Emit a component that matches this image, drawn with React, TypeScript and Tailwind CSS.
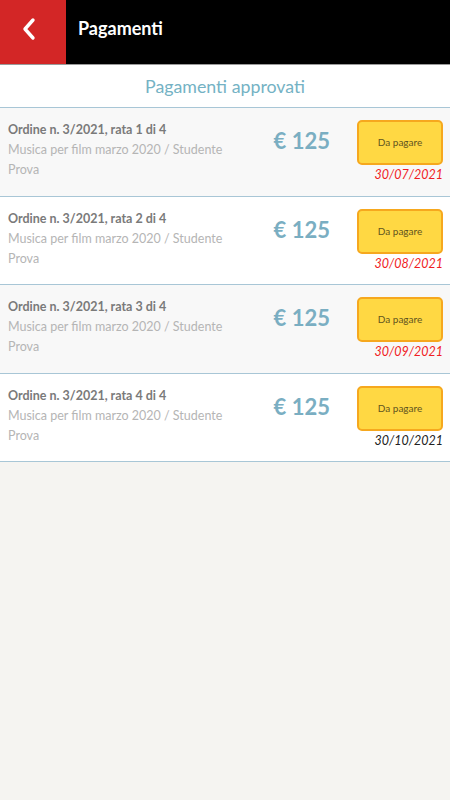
import React from "react";

const rows = [
  { rata: 1, date: "30/07/2021", late: true, bg: "bg-[#f8f8f8]" },
  { rata: 2, date: "30/08/2021", late: true, bg: "bg-white" },
  { rata: 3, date: "30/09/2021", late: true, bg: "bg-[#f8f8f8]" },
  { rata: 4, date: "30/10/2021", late: false, bg: "bg-white" },
];

export default function App() {
  return (
    <div className="min-h-[800px] w-[450px] bg-[#f5f4f1] font-['Lato','Noto_Sans',sans-serif]">
      <div className="flex h-[65px] border-b border-[#9a9a9a] bg-black">
        <div className="flex h-full w-[66px] items-center justify-center bg-[#d32626] pb-[6px] pr-[8px]">
          <svg width="16" height="24" viewBox="0 0 16 24" fill="none">
            <path d="M12 3 L4 12 L12 21" stroke="white" strokeWidth="3.4" strokeLinecap="round" strokeLinejoin="round" />
          </svg>
        </div>
        <div className="flex items-center pl-[12px] pb-[8px] text-[18px] font-bold text-white">Pagamenti</div>
      </div>
      <div className="flex h-[43px] items-center justify-center border-b border-[#a8c6d6] bg-white text-[17.8px] text-[#74b2c4]">
        Pagamenti approvati
      </div>
      {rows.map((r) => (
        <div key={r.rata} className={`flex h-[88.5px] items-start border-b border-[#a8c6d6] pt-[12px] ${r.bg}`}>
          <div className="flex-1 pl-[8px] text-[12.5px] leading-[20px]">
            <div className="font-bold text-[#7a7a7a]">Ordine n. 3/2021, rata {r.rata} di 4</div>
            <div className="w-[225px] text-[#b5b5b5]">Musica per film marzo 2020 / Studente Prova</div>
          </div>
          <div className="mr-[27px] mt-[6px] text-[22px] font-bold leading-[30px] text-[#7aaec2]">€ 125</div>
          <div className="mr-[7px] flex w-[86px] flex-col items-end">
            <div className="flex h-[45px] w-[86px] items-center justify-center rounded-[5px] border-2 border-[#f6a81e] bg-[#ffd843] text-[10px] text-[#5f5420]">
              Da pagare
            </div>
            <div className={`text-[12.5px] italic leading-[20px] ${r.late ? "text-[#f01c24]" : "text-[#222]"}`}>{r.date}</div>
          </div>
        </div>
      ))}
    </div>
  );
}
